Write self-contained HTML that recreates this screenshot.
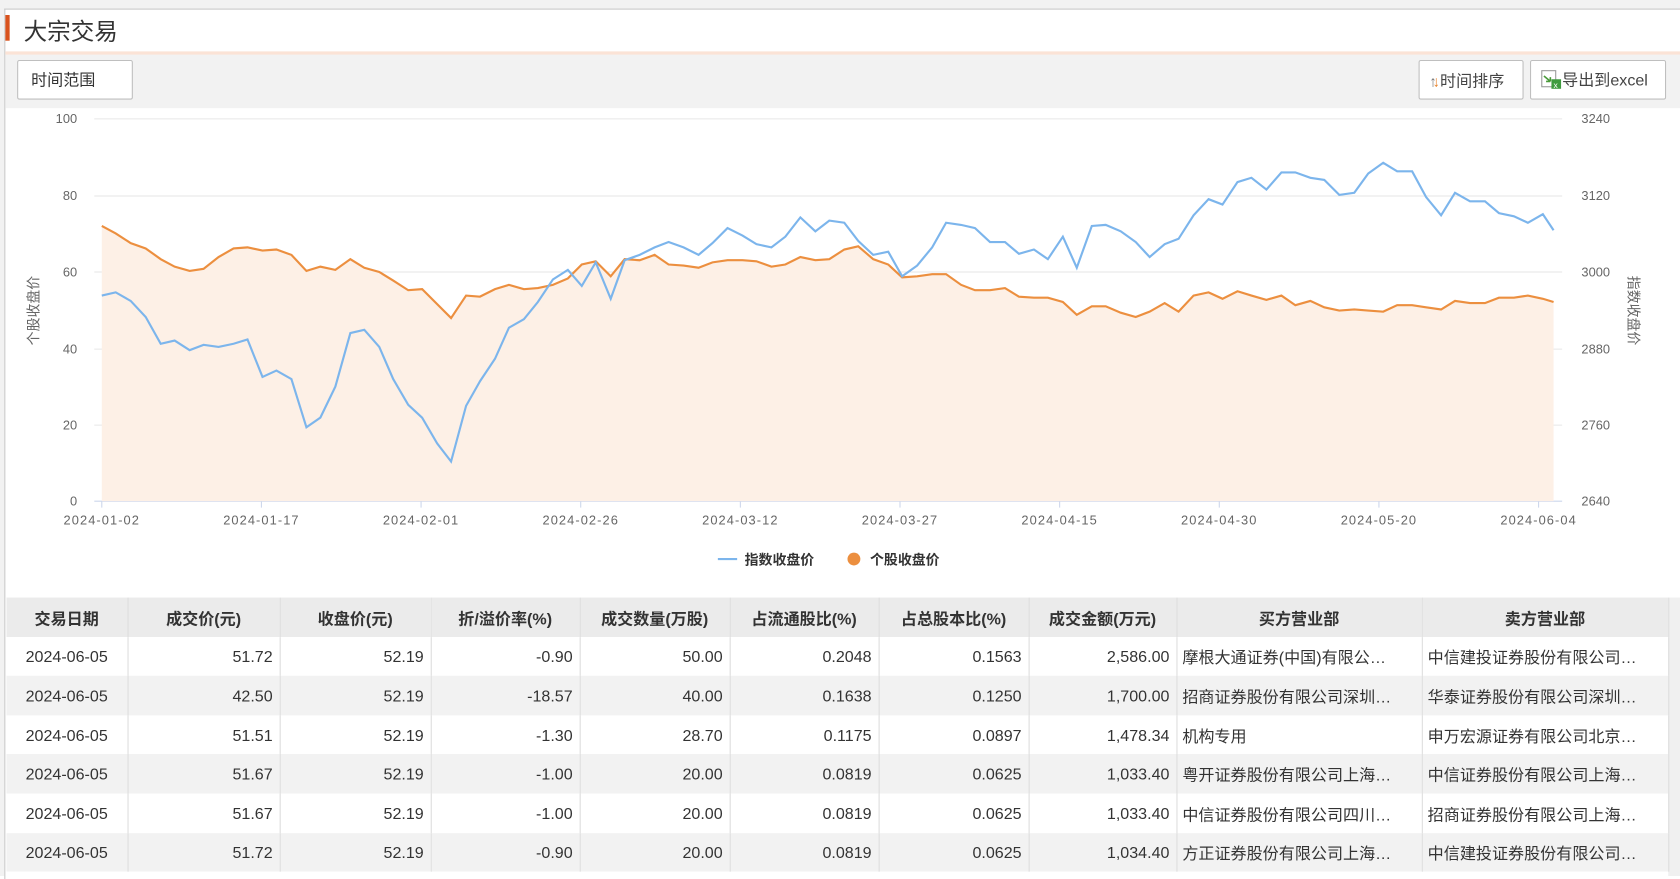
<!DOCTYPE html>
<html><head><meta charset="utf-8"><style>
html,body{margin:0;padding:0;background:#fff;width:1680px;height:876px;overflow:hidden}
#w{position:absolute;left:0;top:0;width:1568px;height:818px;transform:scale(1.071429,1.070905);transform-origin:0 0;font-family:"Liberation Sans","Noto Sans CJK SC",sans-serif;background:#f2f2f2}
.box{position:absolute;left:4px;top:8px;width:1564px;height:812px;background:#fff;border-left:1px solid #c8c8c8;border-top:1px solid #c8c8c8}
.tb{position:absolute;left:5px;top:48px;width:1563px;height:50px;background:#f2f2f2;border-top:3px solid #fbe3d6}
.btn{position:absolute;background:#fff;border:1px solid #bfbfbf;border-radius:2px;font-size:15px;color:#333;line-height:38px;box-sizing:border-box}
table{position:absolute;left:6px;top:558px;border-collapse:collapse;font-size:15px;color:#333}
td,th{height:36.6px;padding:2px 6px 0;border-right:1px solid #ddd;white-space:nowrap;overflow:hidden;box-sizing:border-box}
th{background:#ebebeb;font-weight:bold;text-align:center}
td{text-align:right}
td.c{text-align:center}td.l{text-align:left;padding-left:5px}
tr.g td{background:#f2f2f2}
</style></head><body><div id="w">
<div class="box"></div>
<div style="position:absolute;left:5px;top:14px;width:4px;height:24px;background:#d9531e"></div>
<div style="position:absolute;left:22px;top:12px;font-size:22px;color:#333">大宗交易</div>
<div class="tb"></div>
<div class="btn" style="left:16px;top:56px;width:108px;height:37px;padding-left:12px">时间范围</div>
<div class="btn" style="left:1324px;top:56px;width:98px;height:37px;padding-left:9px;color:#444"><span style="font-size:14px;color:#777;font-weight:bold">↑</span><span style="font-size:14px;color:#e8832a;margin-left:-4px;font-weight:bold">↓</span>时间排序</div>
<div class="btn" style="left:1428px;top:56px;width:127px;height:37px;padding-left:9px;color:#444"><svg width="20" height="18" style="vertical-align:-3px"><rect x="1" y="1" width="13" height="15" fill="#fff" stroke="#999"/><path d="M3 6l6 5M9 11h-4M9 11v-4" stroke="#4a9a3a" fill="none" stroke-width="1.5"/><rect x="10" y="9" width="9" height="9" fill="#3f9b3f"/><text x="12" y="17" font-size="8" fill="#fff">x</text></svg>导出到excel</div>
<svg style="position:absolute;left:0;top:98px" width="1568" height="460" viewBox="0 98 1568 460" font-family="Liberation Sans,sans-serif" font-size="12" fill="#666">
<g stroke="#e6e6e6"><line x1="88" y1="111" x2="1458" y2="111"/><line x1="88" y1="183" x2="1458" y2="183"/><line x1="88" y1="254" x2="1458" y2="254"/><line x1="88" y1="326" x2="1458" y2="326"/><line x1="88" y1="397" x2="1458" y2="397"/></g>
<line x1="88" y1="468" x2="1458" y2="468" stroke="#ccd6eb"/>
<g stroke="#ccd6eb"><line x1="95" y1="468" x2="95" y2="474"/><line x1="244" y1="468" x2="244" y2="474"/><line x1="393" y1="468" x2="393" y2="474"/><line x1="542" y1="468" x2="542" y2="474"/><line x1="691" y1="468" x2="691" y2="474"/><line x1="840" y1="468" x2="840" y2="474"/><line x1="989" y1="468" x2="989" y2="474"/><line x1="1138" y1="468" x2="1138" y2="474"/><line x1="1287" y1="468" x2="1287" y2="474"/><line x1="1436" y1="468" x2="1436" y2="474"/></g>
<g text-anchor="end"><text x="72" y="115">100</text><text x="72" y="187">80</text><text x="72" y="258">60</text><text x="72" y="330">40</text><text x="72" y="401">20</text><text x="72" y="472">0</text></g>
<g><text x="1476" y="115">3240</text><text x="1476" y="187">3120</text><text x="1476" y="258">3000</text><text x="1476" y="330">2880</text><text x="1476" y="401">2760</text><text x="1476" y="472">2640</text></g>
<g text-anchor="middle" letter-spacing="1"><text x="95" y="490">2024-01-02</text><text x="244" y="490">2024-01-17</text><text x="393" y="490">2024-02-01</text><text x="542" y="490">2024-02-26</text><text x="691" y="490">2024-03-12</text><text x="840" y="490">2024-03-27</text><text x="989" y="490">2024-04-15</text><text x="1138" y="490">2024-04-30</text><text x="1287" y="490">2024-05-20</text><text x="1436" y="490">2024-06-04</text></g>
<text transform="translate(36,290) rotate(-90)" text-anchor="middle" font-size="13" font-family="Noto Sans CJK SC">个股收盘价</text>
<text transform="translate(1520,290) rotate(90)" text-anchor="middle" font-size="13" font-family="Noto Sans CJK SC">指数收盘价</text>
<polygon fill="#fdf0e6" points="95,211 108,218 122,227 136,232 150,242 163,249 177,253 190,251 204,240 218,232 231,231 245,234 258,233 272,238 286,253 299,249 313,252 327,242 340,250 354,254 367,262 381,271 394,270 408,284 421,297 435,276 448,277 462,270 475,266 489,270 502,269 516,266 530,260 543,247 556,244 570,258 583,242 597,243 611,238 624,247 638,248 652,250 665,245 679,243 693,243 706,244 720,249 733,247 747,240 761,243 774,242 788,233 801,230 815,242 829,247 842,259 856,258 870,256 883,256 897,266 910,271 924,271 938,269 951,277 965,278 978,278 992,282 1005,294 1019,286 1032,286 1046,292 1060,296 1073,291 1087,283 1100,291 1114,276 1128,273 1141,279 1155,272 1168,276 1182,280 1196,276 1209,285 1223,281 1236,287 1250,290 1264,289 1277,290 1291,291 1304,285 1318,285 1331,287 1345,289 1358,281 1372,283 1386,283 1399,278 1413,278 1426,276 1440,279 1450,282 1450,468 95,468"/>
<polyline fill="none" stroke="#ec8f3f" stroke-width="2" points="95,211 108,218 122,227 136,232 150,242 163,249 177,253 190,251 204,240 218,232 231,231 245,234 258,233 272,238 286,253 299,249 313,252 327,242 340,250 354,254 367,262 381,271 394,270 408,284 421,297 435,276 448,277 462,270 475,266 489,270 502,269 516,266 530,260 543,247 556,244 570,258 583,242 597,243 611,238 624,247 638,248 652,250 665,245 679,243 693,243 706,244 720,249 733,247 747,240 761,243 774,242 788,233 801,230 815,242 829,247 842,259 856,258 870,256 883,256 897,266 910,271 924,271 938,269 951,277 965,278 978,278 992,282 1005,294 1019,286 1032,286 1046,292 1060,296 1073,291 1087,283 1100,291 1114,276 1128,273 1141,279 1155,272 1168,276 1182,280 1196,276 1209,285 1223,281 1236,287 1250,290 1264,289 1277,290 1291,291 1304,285 1318,285 1331,287 1345,289 1358,281 1372,283 1386,283 1399,278 1413,278 1426,276 1440,279 1450,282"/>
<polyline fill="none" stroke="#7cb5ec" stroke-width="2" points="95,276 108,273 122,281 136,296 150,321 163,318 177,327 190,322 204,324 218,321 231,317 245,352 258,346 272,354 286,399 299,390 313,361 327,311 340,308 354,324 367,354 381,378 394,390 408,414 421,431 435,379 448,356 462,335 475,306 489,298 502,282 516,261 530,252 543,267 556,245 570,279 583,243 597,238 611,231 624,226 638,231 652,238 665,227 679,213 693,220 706,228 720,231 733,221 747,203 761,216 774,206 788,208 801,225 815,238 829,235 842,258 856,248 870,231 883,208 897,210 910,213 924,226 938,226 951,237 965,233 978,242 992,221 1005,250 1019,211 1032,210 1046,216 1060,226 1073,240 1087,228 1100,223 1114,201 1128,186 1141,191 1155,170 1168,166 1182,177 1196,161 1209,161 1223,166 1236,168 1250,182 1264,180 1277,162 1291,152 1304,160 1318,160 1331,184 1345,201 1358,180 1372,188 1386,188 1399,199 1413,202 1426,208 1440,200 1450,215"/>
<line x1="670" y1="522" x2="688" y2="522" stroke="#7cb5ec" stroke-width="2"/>
<text x="695" y="527" font-size="13" font-weight="bold" fill="#333" font-family="Noto Sans CJK SC">指数收盘价</text>
<circle cx="797" cy="522" r="6" fill="#ec8f3f"/>
<text x="812" y="527" font-size="13" font-weight="bold" fill="#333" font-family="Noto Sans CJK SC">个股收盘价</text>
</svg>
<div style="position:absolute;left:1557px;top:558px;width:11px;height:260px;background:#f0f0f0"></div>
<table>
<colgroup><col style="width:113px"><col style="width:142px"><col style="width:141px"><col style="width:139px"><col style="width:140px"><col style="width:139px"><col style="width:140px"><col style="width:138px"><col style="width:229px"><col style="width:230px"></colgroup>
<tr><th>交易日期</th><th>成交价(元)</th><th>收盘价(元)</th><th>折/溢价率(%)</th><th>成交数量(万股)</th><th>占流通股比(%)</th><th>占总股本比(%)</th><th>成交金额(万元)</th><th>买方营业部</th><th>卖方营业部</th></tr>
<tr><td class="c">2024-06-05</td><td>51.72</td><td>52.19</td><td>-0.90</td><td>50.00</td><td>0.2048</td><td>0.1563</td><td>2,586.00</td><td class="l">摩根大通证券(中国)有限公…</td><td class="l">中信建投证券股份有限公司…</td></tr>
<tr class="g"><td class="c">2024-06-05</td><td>42.50</td><td>52.19</td><td>-18.57</td><td>40.00</td><td>0.1638</td><td>0.1250</td><td>1,700.00</td><td class="l">招商证券股份有限公司深圳…</td><td class="l">华泰证券股份有限公司深圳…</td></tr>
<tr><td class="c">2024-06-05</td><td>51.51</td><td>52.19</td><td>-1.30</td><td>28.70</td><td>0.1175</td><td>0.0897</td><td>1,478.34</td><td class="l">机构专用</td><td class="l">申万宏源证券有限公司北京…</td></tr>
<tr class="g"><td class="c">2024-06-05</td><td>51.67</td><td>52.19</td><td>-1.00</td><td>20.00</td><td>0.0819</td><td>0.0625</td><td>1,033.40</td><td class="l">粤开证券股份有限公司上海…</td><td class="l">中信证券股份有限公司上海…</td></tr>
<tr><td class="c">2024-06-05</td><td>51.67</td><td>52.19</td><td>-1.00</td><td>20.00</td><td>0.0819</td><td>0.0625</td><td>1,033.40</td><td class="l">中信证券股份有限公司四川…</td><td class="l">招商证券股份有限公司上海…</td></tr>
<tr class="g"><td class="c">2024-06-05</td><td>51.72</td><td>52.19</td><td>-0.90</td><td>20.00</td><td>0.0819</td><td>0.0625</td><td>1,034.40</td><td class="l">方正证券股份有限公司上海…</td><td class="l">中信建投证券股份有限公司…</td></tr>
</table>
</div></body></html>
